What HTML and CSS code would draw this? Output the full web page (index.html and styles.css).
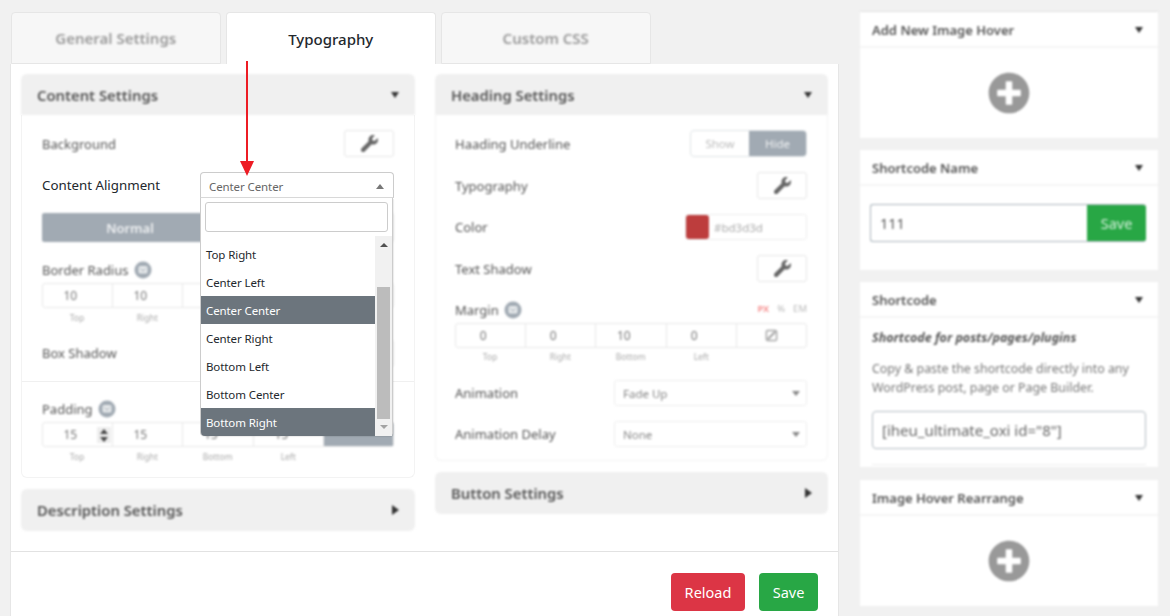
FILE: index.html
```html
<!DOCTYPE html>
<html lang="en">
<head>
<meta charset="utf-8">
<title>Image Hover Settings</title>
<link rel="stylesheet" href="styles.css">
</head>
<body>
<svg class="defs" width="0" height="0" aria-hidden="true">
  <symbol id="wrench" viewBox="0 0 512 512"><path d="M507.73 109.1c-2.24-9.03-13.54-12.09-20.12-5.51l-74.36 74.36-67.88-11.31-11.31-67.88 74.36-74.36c6.62-6.62 3.43-17.9-5.66-20.16-47.38-11.74-99.55.91-136.58 37.93-39.64 39.64-50.55 97.1-34.05 147.2L18.74 402.76c-24.99 24.99-24.99 65.51 0 90.5 24.99 24.99 65.51 24.99 90.5 0l213.21-213.21c50.12 16.71 107.47 5.68 147.37-34.22 37.07-37.07 49.7-89.32 37.91-136.73z"/></symbol>
  <symbol id="plus" viewBox="0 0 512 512"><path d="M256 8C119 8 8 119 8 256s111 248 248 248 248-111 248-248S393 8 256 8zm144 276c0 6.6-5.4 12-12 12h-92v92c0 6.6-5.4 12-12 12h-56c-6.6 0-12-5.4-12-12v-92h-92c-6.6 0-12-5.4-12-12v-56c0-6.6 5.4-12 12-12h92v-92c0-6.6 5.4-12 12-12h56c6.6 0 12 5.4 12 12v92h92c6.6 0 12 5.4 12 12v56z"/></symbol>
  <symbol id="info" viewBox="0 0 18 18"><circle cx="9" cy="9" r="8.5" fill="#a1aab3"/><rect x="4.5" y="5" width="9" height="7.5" rx="1.5" fill="#e6e9eb"/><path d="M6.5 7.5 9 10l2.5-2.5" fill="none" stroke="#a1aab3" stroke-width="1"/></symbol>
</svg>
<div class="page">
  <main class="main">
    <nav class="tabs">
      <div class="tab"><span class="soft">General Settings</span></div>
      <div class="tab active">Typography</div>
      <div class="tab"><span class="soft">Custom CSS</span></div>
    </nav>
    <div class="content">
      <div class="columns">
        <div class="col">
          <section class="panel">
            <header class="panel-head soft"><h3>Content Settings</h3><i class="caret-down"></i></header>
            <div class="panel-body">
              <div class="row soft"><span>Background</span><button class="icon-btn"><svg class="wrench"><use href="#wrench"/></svg></button></div>
              <div class="row">
                <span class="sharp-label">Content Alignment</span>
                <div class="select open">
                  <span>Center Center</span><i class="caret-up"></i>
                  <div class="dropdown">
                    <div class="search"><div class="search-box"></div></div>
                    <div class="listing">
                      <ul class="options">
                        <li>Top Right</li>
                        <li>Center Left</li>
                        <li class="on">Center Center</li>
                        <li>Center Right</li>
                        <li>Bottom Left</li>
                        <li>Bottom Center</li>
                        <li class="on">Bottom Right</li>
                      </ul>
                      <div class="scrollbar"><i class="sb-up"></i><b class="thumb"></b><i class="sb-down"></i></div>
                    </div>
                  </div>
                </div>
              </div>
              <div class="state soft"><span class="on">Normal</span><span>Hover</span></div>
              <div class="label soft">Border Radius <svg class="info"><use href="#info"/></svg></div>
              <div class="cells soft"><span>10</span><span>10</span><span>10</span><span>10</span><span></span></div>
              <div class="caps soft"><span>Top</span><span>Right</span><span>Bottom</span><span>Left</span></div>
              <div class="row shadow-row soft"><span>Box Shadow</span><button class="icon-btn"><svg class="wrench"><use href="#wrench"/></svg></button></div>
              <div class="sep"></div>
              <div class="label pad-label soft">Padding <svg class="info"><use href="#info"/></svg></div>
              <div class="cells soft"><span class="stepper">15<em></em></span><span>15</span><span>15</span><span>15</span><span class="linked"></span></div>
              <div class="caps soft"><span>Top</span><span>Right</span><span>Bottom</span><span>Left</span></div>
            </div>
          </section>
          <section class="panel closed soft">
            <header class="panel-head"><h3>Description Settings</h3><i class="caret-right"></i></header>
          </section>
        </div>
        <div class="col">
          <section class="panel">
            <header class="panel-head soft"><h3>Heading Settings</h3><i class="caret-down"></i></header>
            <div class="panel-body soft">
              <div class="row"><span>Haading Underline</span><div class="toggle"><span>Show</span><span class="on">Hide</span></div></div>
              <div class="row"><span>Typography</span><button class="icon-btn"><svg class="wrench"><use href="#wrench"/></svg></button></div>
              <div class="row color-row"><span>Color</span><div class="color"><i></i><span>#bd3d3d</span></div></div>
              <div class="row"><span>Text Shadow</span><button class="icon-btn"><svg class="wrench"><use href="#wrench"/></svg></button></div>
              <div class="label unit-label"><span>Margin <svg class="info"><use href="#info"/></svg></span><span class="units"><b>PX</b><span>%</span><span>EM</span></span></div>
              <div class="cells"><span>0</span><span>0</span><span>10</span><span>0</span><span class="link-cell"><svg class="link" viewBox="0 0 14 14"><rect x="1.5" y="1.5" width="11" height="11" rx="1.5" fill="none" stroke="#a6a6a6" stroke-width="1.6"/><path d="M3 11 11 3" stroke="#a6a6a6" stroke-width="2.4"/></svg></span></div>
              <div class="caps tight"><span>Top</span><span>Right</span><span>Bottom</span><span>Left</span></div>
              <div class="row anim"><span>Animation</span><div class="native">Fade Up<i class="caret-down small"></i></div></div>
              <div class="row anim2"><span>Animation Delay</span><div class="native">None<i class="caret-down small"></i></div></div>
            </div>
          </section>
          <section class="panel closed soft">
            <header class="panel-head"><h3>Button Settings</h3><i class="caret-right"></i></header>
          </section>
        </div>
      </div>
      <footer class="actions">
        <button class="btn red">Reload</button>
        <button class="btn green">Save</button>
      </footer>
    </div>
  </main>
  <aside class="side soft">
    <section class="card c1">
      <header class="card-head"><h4>Add New Image Hover</h4><i class="caret-down"></i></header>
      <div class="card-plus"><svg class="plus"><use href="#plus"/></svg></div>
    </section>
    <section class="card c2">
      <header class="card-head"><h4>Shortcode Name</h4><i class="caret-down"></i></header>
      <div class="card-body name-body"><div class="name-group"><span>111</span><b>Save</b></div></div>
    </section>
    <section class="card c3">
      <header class="card-head"><h4>Shortcode</h4><i class="caret-down"></i></header>
      <div class="card-body code-body">
        <p class="strong">Shortcode for posts/pages/plugins</p>
        <p class="desc">Copy &amp; paste the shortcode directly into any WordPress post, page or Page Builder.</p>
        <div class="code">[iheu_ultimate_oxi id="8"]</div>
        <div class="code-rule"></div>
      </div>
    </section>
    <section class="card c4">
      <header class="card-head"><h4>Image Hover Rearrange</h4><i class="caret-down"></i></header>
      <div class="card-plus"><svg class="plus"><use href="#plus"/></svg></div>
    </section>
  </aside>
</div>
<svg class="pointer" viewBox="0 0 16 116" aria-hidden="true"><path d="M7 0h2v100H7z" fill="#ed1c24"/><path d="M1 100h14l-7 15z" fill="#ed1c24"/></svg>
</body>
</html>
```
FILE: styles.css
```css
* { box-sizing: border-box; }
html, body { margin: 0; height: 616px; overflow: hidden; }
body { background: #f1f1f1; font-family: "Noto Sans", "Open Sans", sans-serif; font-size: 13px; color: #444; position: relative; }
.defs { position: absolute; }
h3, h4, p, ul { margin: 0; padding: 0; }
ul { list-style: none; }
button { font: inherit; cursor: pointer; }
.soft { filter: blur(0.8px); }

.page { display: flex; align-items: flex-start; padding: 12px 0 0 11px; }
.main { width: 827px; flex: none; }
.side { width: 298px; margin-left: 22px; flex: none; }

.tabs { display: flex; gap: 5.5px; height: 52px; }
.tab { width: 209.5px; height: 52px; background: #f7f7f7; border: 1px solid #e6e6e6; border-radius: 4px 4px 0 0; display: flex; align-items: center; justify-content: center; font-size: 15px; font-weight: 600; color: #999; }
.tab.active { background: #fff; color: #23282d; font-weight: 500; border-bottom: 0; position: relative; z-index: 1; }

.content { background: #fff; height: 552px; box-shadow: 0 0 0 1px #e6e6e6; clip-path: inset(0 -1px); }
.columns { display: grid; grid-template-columns: 394px 393px; column-gap: 20px; padding: 10px 10px 0; height: 488px; border-bottom: 1px solid #e2e2e2; }
.panel { border-radius: 6px; margin-bottom: 11px; }
.panel-head { height: 41px; background: #f0f0f0; border-radius: 6px 6px 0 0; display: flex; align-items: center; justify-content: space-between; padding: 0 16px; }
.panel-head h3 { font-size: 14.8px; font-weight: 600; color: #555; }
.panel.closed .panel-head { height: 42px; border-radius: 6px; }
.panel-body { border: 1px solid #f3f3f3; border-top: 0; border-radius: 0 0 6px 6px; padding: 15px 20px 0; }
.col:first-child .panel-body { height: 363px; }
.col:last-child .panel-body { height: 346px; padding-left: 19px; }

.caret-down, .caret-up, .caret-right { display: block; width: 0; height: 0; border-style: solid; }
.caret-down { border-width: 6px 4.5px 0; border-color: #333 transparent transparent; }
.caret-right { border-width: 5px 0 5px 7px; border-color: transparent transparent transparent #333; }
.caret-up { border-width: 0 4.5px 5px; border-color: transparent transparent #777; }
.caret-down.small { border-width: 5px 4px 0; border-color: #888 transparent transparent; }

.row { display: flex; align-items: center; justify-content: space-between; height: 27px; margin-bottom: 15px; color: #555; }
.color-row { height: 26px; }
.sharp-label { color: #23282d; font-size: 13.3px; padding-bottom: 2px; }
.icon-btn { width: 50px; height: 27px; border: 1px solid #e6e6e6; border-radius: 3px; background: #fff; padding: 0; display: flex; align-items: center; justify-content: center; }
.wrench { width: 17px; height: 17px; fill: #666; }
.select { position: relative; z-index: 5; align-self: flex-start; width: 194px; height: 26px; border: 1px solid #ccc; border-bottom-color: #d8d8d8; border-radius: 4px 4px 0 0; background: #fff; display: flex; align-items: center; justify-content: space-between; padding: 2px 9px 0 8px; font-size: 11.5px; letter-spacing: -.1px; color: #666; }
.dropdown { position: absolute; left: -1px; top: 25px; width: 193px; height: 238px; background: #fff; border: 1px solid #ccc; border-top: 0; border-radius: 0 0 4px 4px; box-shadow: 1px 1px 1px rgba(0,0,0,.08); }
.search { padding: 4px 4px 0; height: 38px; }
.search-box { height: 30px; border: 1px solid #ccc; border-radius: 3px; }
.listing { display: flex; height: 200px; }
.options { flex: none; width: 174px; padding-top: 4px; color: #23282d; }
.options li { height: 28px; line-height: 30px; padding-left: 5px; }
.options li.on { background: #6c757d; color: #fff; }
.options li:last-child { border-radius: 0 0 0 4px; }
.scrollbar { position: relative; flex: none; width: 17px; background: #f1f1f1; }
.thumb { position: absolute; left: 2px; top: 51px; width: 13px; height: 132px; background: #bcbcbc; }
.sb-up, .sb-down { position: absolute; left: 4.5px; width: 0; height: 0; border-style: solid; }
.sb-up { top: 7px; border-width: 0 4px 4px; border-color: transparent transparent #505050; }
.sb-down { bottom: 7px; border-width: 4px 4px 0; border-color: #a3a3a3 transparent transparent; }

.state { display: flex; width: 352px; height: 29px; margin-top: -1px; border-radius: 3px; overflow: hidden; }
.state span { width: 176px; display: flex; align-items: center; justify-content: center; border: 1px solid #e3e3e3; color: #777; font-weight: 600; }
.state span.on { background: #a1aab3; border-color: #a1aab3; color: #eef0f2; }
.label { display: flex; align-items: center; gap: 5px; height: 20px; margin-top: 18px; color: #555; }
.info { width: 18px; height: 18px; }
.cells { display: grid; grid-template-columns: 69.5px 70.5px 70.5px 70.5px 1fr; width: 352px; height: 25px; margin-top: 3px; border: 1px solid #e8e8e8; border-radius: 3px; background: #fff; }
.cells > span { display: flex; align-items: center; justify-content: center; padding-right: 14px; border-right: 1px solid #e8e8e8; color: #777; font-size: 12px; position: relative; }
.cells > span:last-child { border-right: 0; padding-right: 0; }
.caps { display: grid; grid-template-columns: 70px 70.5px 70.5px 70.5px; width: 352px; margin-top: 3px; height: 14px; font-size: 8.5px; line-height: 14px; color: #aaa; text-align: center; }
.caps.tight { margin-top: 1.5px; }
.shadow-row { margin: 14.5px 0 0; }
.sep { height: 1px; background: #f0f0f0; margin: 14.5px -20px 0; }
.pad-label { margin-top: 17px; }
.stepper em { position: absolute; right: 1px; top: 4px; width: 14px; height: 16px; background: #eee; }
.stepper em::before, .stepper em::after { content: ""; position: absolute; left: 3px; border-style: solid; width: 0; height: 0; }
.stepper em::before { top: 2px; border-width: 0 4px 5px; border-color: transparent transparent #444; }
.stepper em::after { bottom: 1px; border-width: 5px 4px 0; border-color: #444 transparent transparent; }
.linked { background: #a1aab3; }
.panel.closed { margin-top: 11px; margin-bottom: 0; }

.toggle { display: flex; width: 117px; height: 27px; border: 1px solid #dfe3e6; border-radius: 4px; overflow: hidden; }
.toggle span { flex: 1; display: flex; align-items: center; justify-content: center; font-size: 11.5px; color: #bbb; }
.toggle .on { flex: none; width: 57px; background: #a1aab3; color: #eef0f2; }
.color { display: flex; align-items: center; width: 122px; height: 26px; border: 1px solid #eee; border-radius: 3px; }
.color i { width: 23px; height: 24px; background: #bd3d3d; border-radius: 3px; }
.color span { padding-left: 5px; font-size: 11.5px; color: #aaa; }
.unit-label { justify-content: space-between; margin-top: 18px; }
.unit-label > span:first-child { display: flex; align-items: center; gap: 5px; }
.units { display: flex; gap: 8px; font-size: 9.5px; color: #bbb; align-items: center; margin-top: -4px; }
.units b { color: #f58a8a; font-weight: 600; }
.link { width: 13px; height: 13px; }
.anim { margin-top: 16px; height: 26px; margin-bottom: 15px; }
.anim2 { height: 26px; margin-bottom: 0; }
.native { width: 193px; height: 26px; border: 1px solid #eee; border-radius: 3px; display: flex; align-items: center; justify-content: space-between; padding: 2px 6px 0 8px; font-size: 11.5px; color: #888; }

.actions { display: flex; justify-content: flex-end; gap: 14px; padding: 21px 20px 0 0; }
.btn { height: 38px; border: 0; border-radius: 4px; color: #fff; font-size: 14.5px; }
.red { width: 74px; background: #dc3545; }
.green { width: 59px; background: #28a745; }

.card { background: #fff; margin-bottom: 12px; }
.card-head { height: 36px; padding: 1px 15px 0 12px; border-bottom: 2px solid #f5f5f5; display: flex; align-items: center; justify-content: space-between; }
.card-head h4 { font-size: 13px; font-weight: 600; color: #555; }
.c1 { height: 126px; box-shadow: 0 -1px 0 #e2e2e2; } .c2 { height: 120px; } .c3 { height: 185px; margin-bottom: 13px; } .c4 { height: 126px; }
.card-plus { display: flex; justify-content: center; padding-top: 24px; }
.plus { width: 42px; height: 42px; fill: #999; }
.card-body { padding: 0 12px; }
.name-body { padding: 18px 12px 0 10px; }
.name-group { display: flex; height: 38px; border-radius: 3px; overflow: hidden; border: 1px solid #aab4bc; border-right: 0; }
.name-group span { flex: 1; padding-left: 9px; line-height: 36px; font-size: 14.5px; color: #555; }
.name-group b { width: 59px; margin: -1px 0; background: #28a745; color: #d5f0dc; font-weight: 400; font-size: 14.5px; display: flex; align-items: center; justify-content: center; }
.code-body { padding: 11px 12px 0; }
.strong { font-weight: 700; font-style: italic; font-size: 12.5px; color: #555; line-height: 18px; }
.desc { margin-top: 12px; font-size: 12.4px; line-height: 19px; color: #777; }
.code { margin-top: 14px; height: 38px; border: 1px solid #b4bcc3; border-radius: 4px; padding-left: 9px; line-height: 36px; font-size: 15px; color: #666; }
.code-rule { height: 1px; background: #eee; margin-top: 15px; }

.pointer { position: absolute; left: 239px; top: 61px; width: 16px; height: 116px; z-index: 10; }
```
